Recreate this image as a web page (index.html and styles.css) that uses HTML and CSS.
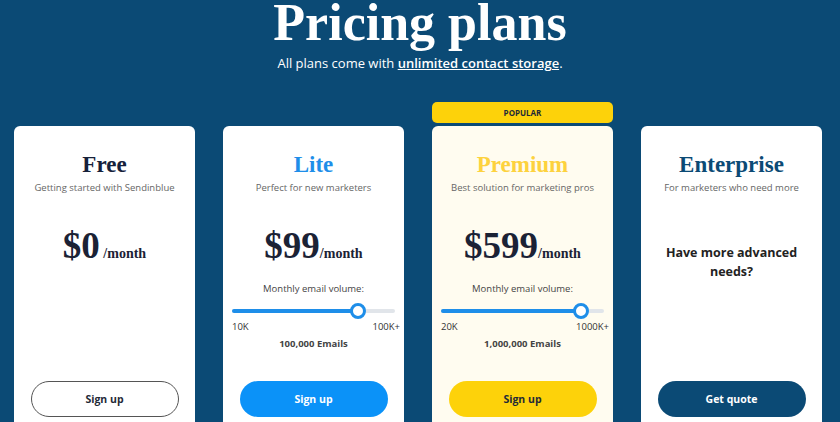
FILE: index.html
```html
<!DOCTYPE html>
<html lang="en">
<head>
    <meta charset="UTF-8">
    <meta name="viewport" content="width=device-width, initial-scale=1.0">
    <title>Pricing plans</title>
    <link rel="stylesheet" href="styles.css">
</head>
<body>
    <header class="intro">
        <h1>Pricing plans</h1>
        <p>All plans come with <a href="#">unlimited contact storage</a>.</p>
    </header>

    <div class="plans">
        <!-- Free -->
        <div class="plan">
            <div class="badge-space"></div>
            <div class="card">
                <h2 class="plan-name name-free">Free</h2>
                <p class="plan-desc">Getting started with Sendinblue</p>
                <div class="price"><span class="amount">$0</span><span class="per">&nbsp;/month</span></div>
                <button class="btn btn-outline">Sign up</button>
            </div>
        </div>

        <!-- Lite -->
        <div class="plan">
            <div class="badge-space"></div>
            <div class="card">
                <h2 class="plan-name name-lite">Lite</h2>
                <p class="plan-desc">Perfect for new marketers</p>
                <div class="price"><span class="amount">$99</span><span class="per">/month</span></div>
                <div class="volume">
                    <div class="volume-label">Monthly email volume:</div>
                    <div class="slider">
                        <div class="track"><div class="fill" style="width: 77%"></div></div>
                        <div class="knob" style="left: 77%"></div>
                    </div>
                    <div class="range"><span>10K</span><span>100K+</span></div>
                    <div class="count">100,000 Emails</div>
                </div>
                <button class="btn btn-blue">Sign up</button>
            </div>
        </div>

        <!-- Premium -->
        <div class="plan">
            <div class="badge">POPULAR</div>
            <div class="card card-popular">
                <h2 class="plan-name name-premium">Premium</h2>
                <p class="plan-desc">Best solution for marketing pros</p>
                <div class="price"><span class="amount">$599</span><span class="per">/month</span></div>
                <div class="volume">
                    <div class="volume-label">Monthly email volume:</div>
                    <div class="slider">
                        <div class="track"><div class="fill" style="width: 86%"></div></div>
                        <div class="knob" style="left: 86%"></div>
                    </div>
                    <div class="range"><span>20K</span><span>1000K+</span></div>
                    <div class="count">1,000,000 Emails</div>
                </div>
                <button class="btn btn-yellow">Sign up</button>
            </div>
        </div>

        <!-- Enterprise -->
        <div class="plan">
            <div class="badge-space"></div>
            <div class="card">
                <h2 class="plan-name name-enterprise">Enterprise</h2>
                <p class="plan-desc">For marketers who need more</p>
                <div class="advanced">Have more advanced needs?</div>
                <button class="btn btn-navy">Get quote</button>
            </div>
        </div>
    </div>
</body>
</html>
```

FILE: styles.css
```css
/* General Styles */
body {
    font-family: 'Open Sans', sans-serif;
    margin: 0;
    padding: 0;
    background-color: #0b4a75;
    color: #1f2a37;
    height: 422px;
    overflow: hidden;
}

/* Heading */
.intro {
    text-align: center;
    color: #fff;
}

.intro h1 {
    font-family: 'Liberation Serif', serif;
    font-weight: bold;
    font-size: 52px;
    line-height: 44px;
    margin: 0;
    padding-top: 1px;
}

.intro p {
    margin: 8px 0 0 0;
    font-size: 13px;
    line-height: 20px;
}

.intro a {
    color: #fff;
    font-weight: 600;
}

/* Plan Columns */
.plans {
    display: grid;
    grid-template-columns: repeat(4, 181px);
    gap: 28px;
    padding: 0 18px 0 14px;
    margin-top: 29px;
}

.plan {
    display: flex;
    flex-direction: column;
}

.badge,
.badge-space {
    height: 21px;
    margin-bottom: 3px;
}

.badge {
    background-color: #fdd20a;
    border-radius: 5px;
    font-size: 8px;
    font-weight: bold;
    color: #1f2a37;
    text-align: center;
    line-height: 21px;
}

.card {
    background-color: #fff;
    border-radius: 6px;
    height: 310px;
    padding: 26px 9px 19px 9px;
    box-sizing: border-box;
    display: flex;
    flex-direction: column;
    align-items: center;
    text-align: center;
}

.card-popular {
    background-color: #fffcf0;
}

.plan-name {
    font-family: 'Liberation Serif', serif;
    font-weight: bold;
    font-size: 23px;
    line-height: 26px;
    margin: 0;
}

.name-free { color: #16213a; }
.name-lite { color: #1e8ee9; }
.name-premium { color: #fdd23e; }
.name-enterprise { color: #0b4a75; }

.plan-desc {
    font-size: 9.5px;
    color: #666;
    margin: 3px 0 0 0;
    line-height: 14px;
    white-space: nowrap;
}

/* Price */
.price {
    margin-top: 31px;
    display: flex;
    align-items: baseline;
    justify-content: center;
    color: #1b2235;
    font-family: 'Liberation Serif', serif;
    font-weight: bold;
}

.amount {
    font-size: 37px;
    line-height: 40px;
}

.per {
    font-size: 14px;
}

/* Email volume slider */
.volume {
    width: 100%;
    margin-top: 16px;
}

.volume-label {
    font-size: 9.5px;
    color: #444;
    line-height: 14px;
}

.slider {
    position: relative;
    height: 16px;
    margin-top: 7px;
}

.track {
    position: absolute;
    left: 0;
    right: 0;
    top: 6px;
    height: 4px;
    border-radius: 2px;
    background-color: #e1e5ea;
}

.fill {
    height: 100%;
    border-radius: 2px;
    background-color: #1e8ee9;
}

.knob {
    position: absolute;
    top: 0;
    width: 10px;
    height: 10px;
    margin-left: -8px;
    border: 3px solid #1e8ee9;
    border-radius: 50%;
    background-color: #fff;
}

.range {
    display: flex;
    justify-content: space-between;
    font-size: 9.5px;
    color: #333;
    margin: 1px -5px 0 0;
    line-height: 14px;
}

.count {
    font-size: 9.5px;
    font-weight: bold;
    color: #444;
    margin-top: 3px;
    line-height: 14px;
}

.advanced {
    margin-top: 48px;
    max-width: 140px;
    font-size: 12.5px;
    font-weight: bold;
    line-height: 19px;
    color: #222;
}

/* Buttons */
.btn {
    width: 148px;
    height: 36px;
    border-radius: 18px;
    font-family: 'Open Sans', sans-serif;
    font-size: 10.5px;
    font-weight: bold;
    cursor: pointer;
    margin-top: auto;
    flex-shrink: 0;
}

.btn-outline {
    background-color: #fff;
    border: 1px solid #555;
    color: #1f2a37;
}

.btn-blue {
    background-color: #0b92f8;
    border: none;
    color: #fff;
}

.btn-yellow {
    background-color: #fdd20a;
    border: none;
    color: #1f2a37;
}

.btn-navy {
    background-color: #0b4a75;
    border: none;
    color: #fff;
}
```
